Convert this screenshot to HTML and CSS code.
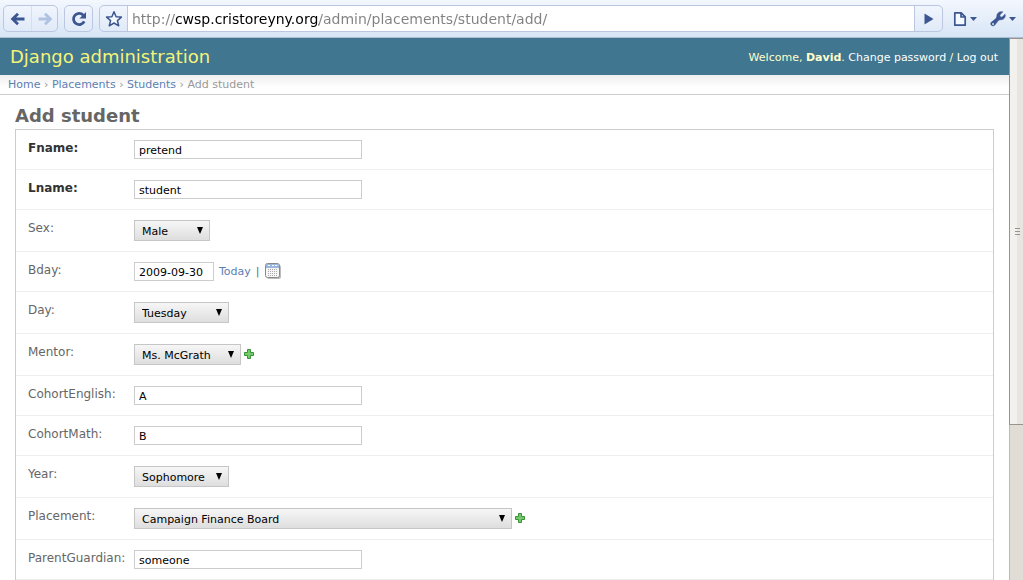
FILE: index.html
```html
<!DOCTYPE html>
<html lang="en">
<head>
    <meta charset="UTF-8">
    <meta name="viewport" content="width=device-width, initial-scale=1.0">
    <title>Add student | Django administration</title>
    <link rel="stylesheet" href="styles.css">
</head>
<body>
    <!-- Browser toolbar -->
    <div class="toolbar">
        <div class="tool-group">
            <button class="tool" type="button" aria-label="Back">
                <svg width="16" height="16" viewBox="0 0 16 16"><path d="M14.5 8H3M8 2.8L2.6 8L8 13.2" fill="none" stroke="#3b5690" stroke-width="2.8"/></svg>
            </button>
            <button class="tool tool-next" type="button" aria-label="Forward" disabled>
                <svg width="16" height="16" viewBox="0 0 16 16"><path d="M1.5 8H13M8 2.8L13.4 8L8 13.2" fill="none" stroke="#b0c2e2" stroke-width="2.8"/></svg>
            </button>
        </div>
        <div class="tool-group">
            <button class="tool" type="button" aria-label="Reload">
                <svg width="18" height="18" viewBox="0 0 18 18"><path d="M13.3 5.2A5.6 5.6 0 1 0 14.2 11.3" fill="none" stroke="#3b5690" stroke-width="2.8"/><path d="M16 2V8.6H9.4Z" fill="#3b5690"/></svg>
            </button>
        </div>
        <form class="tool-group address">
            <button class="tool" type="button" aria-label="Bookmark">
                <svg width="18" height="18" viewBox="0 0 18 18"><path d="M9 1.8L11.1 6.7L16.4 7.1L12.4 10.6L13.7 15.8L9 13L4.3 15.8L5.6 10.6L1.6 7.1L6.9 6.7Z" fill="#f4f8ff" stroke="#3b5690" stroke-width="1.5" stroke-linejoin="round"/></svg>
            </button>
            <div class="url-box">
                <input class="url" type="text" aria-label="Address" value="http://cwsp.cristoreyny.org/admin/placements/student/add/">
            </div>
            <button class="tool" type="button" aria-label="Go">
                <svg width="10" height="12" viewBox="0 0 10 12"><path d="M0.5 0.5L9.5 6L0.5 11.5Z" fill="#3b5690"/></svg>
            </button>
        </form>
        <div class="menus">
            <button class="menu" type="button" aria-label="Page menu">
                <svg width="14" height="16" viewBox="0 0 14 16"><path d="M1.8 1.8H8.2L12.2 5.8V14.2H1.8ZM8 2V6H12" fill="#f4f8ff" stroke="#3b5690" stroke-width="1.7" stroke-linejoin="round"/></svg>
                <svg width="7" height="4" viewBox="0 0 7 4"><path d="M0 0H7L3.5 4Z" fill="#3b5690"/></svg>
            </button>
            <button class="menu" type="button" aria-label="Tools menu">
                <svg width="16" height="16" viewBox="0 0 16 16"><path d="M12.8 0.8L9.8 4L10.2 5.8L12 6.2L15.1 3.2C15.9 6.5 13.5 9.2 9.9 8.7L8.3 9.6L5.2 13.6C3.6 16 -0.2 14.6 1 11.6L6 7.5L6.8 5.6C6.6 2.3 9.4 0 12.8 0.8Z" fill="#3b5690" stroke="#3b5690" stroke-width="0.6"/><circle cx="3" cy="13" r="0.9" fill="#e8f0fb"/></svg>
                <svg width="7" height="4" viewBox="0 0 7 4"><path d="M0 0H7L3.5 4Z" fill="#3b5690"/></svg>
            </button>
        </div>
    </div>

    <div class="viewport">
        <div class="page">
            <div class="header">
                <div class="branding">Django administration</div>
                <div class="user-tools">Welcome, <strong>David</strong>. <a href="#">Change password</a> / <a href="#">Log out</a></div>
            </div>
            <div class="breadcrumbs"><a href="#">Home</a> › <a href="#">Placements</a> › <a href="#">Students</a> › Add student</div>

            <div class="content">
                <h1>Add student</h1>
                <form class="module">
                    <div class="form-row">
                        <label class="required" for="fname">Fname:</label>
                        <input class="text-field" type="text" id="fname" value="pretend">
                    </div>
                    <div class="form-row">
                        <label class="required" for="lname">Lname:</label>
                        <input class="text-field" type="text" id="lname" value="student">
                    </div>
                    <div class="form-row">
                        <label for="sex">Sex:</label>
                        <span class="select"><select class="short" id="sex"><option>Male</option><option>Female</option></select></span>
                    </div>
                    <div class="form-row">
                        <label for="bday">Bday:</label>
                        <input class="text-field date-field" type="text" id="bday" value="2009-09-30">
                        <span class="shortcuts">
                            <a href="#">Today</a>
                            <span class="bar">|</span>
                            <a href="#" aria-label="Calendar"><svg width="16" height="16" viewBox="0 0 16 16">
                                <rect x="2" y="2" width="14" height="14" rx="2" fill="#bbb"/>
                                <rect x="0.5" y="0.5" width="14" height="14" rx="2" fill="#f6f6f6" stroke="#888"/>
                                <path d="M1 5V2Q1 1 2 1H13Q14 1 14 2V5Z" fill="#9bb8dc"/>
                                <path d="M3 2.5H5M7 2.5H9M10 2.5H12" stroke="#fff"/>
                                <path d="M3 6.5H13M3 8.5H13M3 10.5H13M3 12.5H13" stroke="#aaa" stroke-dasharray="1 1"/>
                            </svg></a>
                        </span>
                    </div>
                    <div class="form-row">
                        <label for="day">Day:</label>
                        <span class="select"><select class="medium" id="day"><option>Monday</option><option selected>Tuesday</option><option>Wednesday</option><option>Thursday</option><option>Friday</option></select></span>
                    </div>
                    <div class="form-row">
                        <label for="mentor">Mentor:</label>
                        <span class="select"><select class="name" id="mentor"><option>Ms. McGrath</option></select></span>
                        <a class="add" href="#" aria-label="Add mentor"><svg width="10" height="10" viewBox="0 0 10 10"><path d="M3.5 0.5H6.5V3.5H9.5V6.5H6.5V9.5H3.5V6.5H0.5V3.5H3.5Z" fill="#74c96c" stroke="#379336"/></svg></a>
                    </div>
                    <div class="form-row">
                        <label for="english">CohortEnglish:</label>
                        <input class="text-field" type="text" id="english" value="A">
                    </div>
                    <div class="form-row">
                        <label for="math">CohortMath:</label>
                        <input class="text-field" type="text" id="math" value="B">
                    </div>
                    <div class="form-row">
                        <label for="year">Year:</label>
                        <span class="select"><select class="medium" id="year"><option>Freshman</option><option selected>Sophomore</option><option>Junior</option><option>Senior</option></select></span>
                    </div>
                    <div class="form-row">
                        <label for="placement">Placement:</label>
                        <span class="select"><select class="long" id="placement"><option>Campaign Finance Board</option></select></span>
                        <a class="add" href="#" aria-label="Add placement"><svg width="10" height="10" viewBox="0 0 10 10"><path d="M3.5 0.5H6.5V3.5H9.5V6.5H6.5V9.5H3.5V6.5H0.5V3.5H3.5Z" fill="#74c96c" stroke="#379336"/></svg></a>
                    </div>
                    <div class="form-row">
                        <label for="guardian">ParentGuardian:</label>
                        <input class="text-field" type="text" id="guardian" value="someone">
                    </div>
                </form>
            </div>
        </div>

        <div class="scrollbar">
            <div class="thumb"><span class="grip"></span></div>
        </div>
    </div>
</body>
</html>
```

FILE: styles.css
```css
* {
    box-sizing: border-box;
}

body {
    display: flex;
    flex-direction: column;
    height: 100vh;
    margin: 0;
    overflow: hidden;
    font-family: "DejaVu Sans", sans-serif;
    font-size: 12px;
    color: #333;
    background: #fff;
}

a {
    color: #5b80b2;
    text-decoration: none;
}

svg {
    display: block;
}

/* Browser toolbar */
.toolbar {
    display: flex;
    flex: none;
    align-items: center;
    gap: 6px;
    height: 38px;
    padding: 0 7px 0 3px;
    background: linear-gradient(#f3f7fe, #d8e5f6);
    border-bottom: 1px solid #afbdd1;
}

.tool-group {
    display: flex;
    height: 27px;
    border: 1px solid #bcc6e0;
    border-radius: 5px;
    background: linear-gradient(#f1f5fd, #e0eaf8);
    overflow: hidden;
}

.tool {
    display: flex;
    align-items: center;
    justify-content: center;
    width: 27px;
    padding: 0;
    border: none;
    background: none;
}

.tool-next {
    width: 26px;
    border-left: 1px solid #d5dff0;
}

.address {
    flex: 1;
    margin: 0;
}

.url-box {
    flex: 1;
    border: solid #bcc6e0;
    border-width: 0 1px;
    background: #fff;
}

/* The host name is black, the rest of the address grey */
.url {
    display: block;
    width: 100%;
    height: 25px;
    padding: 0 4px;
    border: none;
    outline: none;
    background: linear-gradient(to right, #808080 47px, #000 47px 191px, #808080 191px);
    -webkit-background-clip: text;
    background-clip: text;
    color: transparent;
    caret-color: #000;
    font: 14px "DejaVu Sans", sans-serif;
}

.menus {
    display: flex;
    gap: 13px;
    margin-left: 4px;
}

.menu {
    display: flex;
    align-items: center;
    gap: 3px;
    padding: 0;
    border: none;
    background: none;
}

/* Admin page */
.viewport {
    display: flex;
    flex: 1;
    min-height: 0;
}

.page {
    flex: 1;
    min-width: 0;
    overflow: hidden;
}

.header {
    display: flex;
    align-items: center;
    justify-content: space-between;
    height: 37px;
    padding: 0 11px 0 10px;
    background: #417690;
    color: #ffc;
}

.branding {
    font-size: 18px;
    color: #f4f379;
}

.user-tools {
    padding-top: 2px;
    font-size: 11px;
}

.user-tools a {
    color: #fff;
}

.breadcrumbs {
    height: 20px;
    padding: 0 8px;
    border-bottom: 1px solid #ccc;
    background: linear-gradient(#eee, #fff 12px);
    font-size: 11px;
    line-height: 19px;
    color: #999;
}

.content {
    padding: 10px 15px;
}

h1 {
    margin: 0 0 3px;
    font-size: 18px;
    line-height: 21px;
    color: #666;
}

.module {
    border: 1px solid #ccc;
}

.form-row {
    display: flex;
    align-items: flex-start;
    padding: 10px 12px;
    border-bottom: 1px solid #eee;
}

label {
    flex: none;
    width: 106px;
    line-height: 16px;
    color: #666;
}

.required {
    font-weight: bold;
    color: #333;
}

.text-field {
    width: 228px;
    height: 19px;
    padding: 1px 4px 0;
    border: 1px solid #ccc;
    background: #fff;
    color: #000;
    font: 11px "DejaVu Sans", sans-serif;
}

.date-field {
    width: 80px;
}

.select {
    position: relative;
}

.select::after {
    content: "";
    position: absolute;
    top: 7px;
    right: 7px;
    border: solid transparent;
    border-width: 7px 3px 0;
    border-top-color: #000;
    pointer-events: none;
}

select {
    display: block;
    height: 21px;
    padding: 1px 7px 0;
    border: 1px solid #c6c6c6;
    border-radius: 0;
    background: linear-gradient(#f6f6f6, #dedede);
    color: #000;
    font: 11px "DejaVu Sans", sans-serif;
    appearance: none;
}

.short {
    width: 76px;
}

.medium {
    width: 95px;
}

.name {
    width: 107px;
}

.long {
    width: 378px;
}

.shortcuts {
    display: flex;
    align-items: center;
    gap: 5px;
    height: 18px;
    margin-left: 5px;
    font-size: 11px;
}

.bar {
    color: #417690;
}

.add {
    margin: 5px 0 0 3px;
}

/* Scrollbar */
.scrollbar {
    flex: none;
    width: 14px;
    background: #e1ddd6;
    border-left: 1px solid #bdb8b1;
}

.thumb {
    display: flex;
    align-items: center;
    justify-content: flex-end;
    height: 387px;
    margin-left: -1px;
    padding-right: 3px;
    border: solid #99948e;
    border-width: 1px 0 1px 1px;
    background: linear-gradient(to right, #f3f1ed 7px, #e8e4e0 7px);
}

.grip {
    width: 5px;
    height: 7px;
    background: repeating-linear-gradient(#99948e 0 1px, transparent 1px 3px);
}
```
